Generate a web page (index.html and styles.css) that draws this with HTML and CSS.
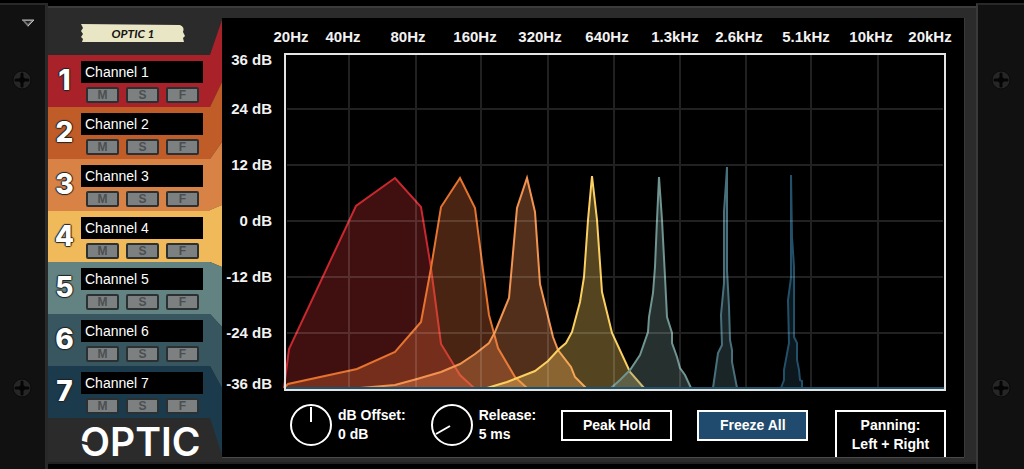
FILE: index.html
```html
<!DOCTYPE html>
<html lang="en">
<head>
  <meta charset="UTF-8">
  <title>Optic 1</title>
  <link rel="stylesheet" href="styles.css">
</head>
<body>
  <svg width="0" height="0" class="defs" aria-hidden="true">
    <symbol id="screw" viewBox="0 0 20 20">
      <circle cx="10" cy="10" r="9" fill="#262626" stroke="#0b0b0b" stroke-width="1"/>
      <path d="M10 4v12M4 10h12" stroke="#050505" stroke-width="3" stroke-linecap="round"/>
      <circle cx="10" cy="10" r="3" fill="#050505"/>
    </symbol>
  </svg>

  <div class="rack">
    <aside class="rail rail-left">
      <div class="rail-top">
        <button class="fold" aria-label="Fold device">
          <svg width="14" height="9" viewBox="0 0 14 9">
            <path d="M1 1h12L7 8z" fill="#777"/>
            <path d="M4 2h6L7 5z" fill="#222"/>
            <path d="M1 1h12L7 7" fill="none" stroke="#bbb" stroke-width="1"/>
          </svg>
        </button>
      </div>
      <svg class="screw"><use href="#screw"/></svg>
      <svg class="screw"><use href="#screw"/></svg>
    </aside>

    <main class="panel">
      <div class="side">
        <div class="strip">
          <div class="strip-head">
            <div class="tape">
              <svg viewBox="0 0 104 18" preserveAspectRatio="none" aria-hidden="true">
                <path d="M0 0L99 1Q104 3 102 8L104 12L102 14L103 18L1 18L2 15L0 13L2 10L0 7L2 4z" fill="#e9e6c6"/>
              </svg>
              <span>OPTIC 1</span>
            </div>
          </div>

          <!-- Channels -->
          <div class="channels" id="channels"></div>

          <div class="strip-foot">
            <svg class="logo" width="130" height="46" viewBox="0 0 130 46">
              <text x="1" y="35">OPTIC</text>
              <path d="M0 19L11 22V25L0 22z" fill="#2b2b2b"/>
            </svg>
          </div>
        </div>

        <!-- Coloured edges that fan out towards the display -->
        <svg class="wings" viewBox="0 0 12 458" preserveAspectRatio="none" aria-hidden="true">
          <path d="M0 49L12 14V76L0 101z" fill="#a9222a"/>
          <path d="M0 101L12 76V136L0 153z" fill="#c05c27"/>
          <path d="M0 153L12 136V199L0 204z" fill="#d98245"/>
          <path d="M0 204L12 199V261L0 256z" fill="#f0ba5a"/>
          <path d="M0 256L12 261V321L0 308z" fill="#628381"/>
          <path d="M0 308L12 321V382L0 360z" fill="#375660"/>
          <path d="M0 360L12 382V449L0 412z" fill="#1b3b4d"/>
        </svg>
      </div>

      <section class="screen">
        <svg class="graph" viewBox="222 18 742 374" role="img" aria-label="Band levels by frequency">
          <g class="axis axis-x">
            <text x="291" y="42">20Hz</text>
            <text x="343" y="42">40Hz</text>
            <text x="408" y="42">80Hz</text>
            <text x="475" y="42">160Hz</text>
            <text x="540" y="42">320Hz</text>
            <text x="607" y="42">640Hz</text>
            <text x="675" y="42">1.3kHz</text>
            <text x="739" y="42">2.6kHz</text>
            <text x="806" y="42">5.1kHz</text>
            <text x="871" y="42">10kHz</text>
            <text x="930" y="42">20kHz</text>
          </g>
          <g class="axis axis-y">
            <text x="272" y="65">36 dB</text>
            <text x="272" y="114">24 dB</text>
            <text x="272" y="170">12 dB</text>
            <text x="272" y="226">0 dB</text>
            <text x="272" y="282">-12 dB</text>
            <text x="272" y="338">-24 dB</text>
            <text x="272" y="389">-36 dB</text>
          </g>
          <g class="bands">
            <path class="band b1" d="M284 388L289 349L356 206L395 178L421 207L431 268L441 344L460 375L474 388"/>
            <path class="band b2" d="M284 388L288 384L357 369L395 352L421 322L431 268L441 207L460 178L475 208L483 270L489 315L498 348L515 377L527 388"/>
            <path class="band b3" d="M360 388L395 385L417 379L441 372L460 364L475 354L489 343L495 332L509 298L517 208L527 178L535 212L540 284L553 337L558 350L571 367L575 377L586 388"/>
            <path class="band b4" d="M487 388L507 382L535 371L548 361L559 349L566 343L572 332L580 302L584 277L588 220L592 176L597 220L602 292L612 333L630 372L644 388"/>
            <path class="band b5" d="M611 388L620 380L630 370L640 355L648 332L649 317L653 293L655 267L657 220L659 177L662 220L665 277L667 317L672 333L672 343L677 357L680 368L685 375L691 388"/>
            <path class="band b6" d="M713 388L718 353L722 345L721 315L724 283L724 211L726 183L727 167L727 270L729 307L730 340L732 350L732 362L737 388"/>
            <path class="band b7" d="M781 388L784 380L784 370L789 343L788 300L791 278L791 175L792 237L794 267L794 337L797 343L797 360L799 370L800 380L802 381L802 388"/>
          </g>
          <path class="grid" d="M349 55V388M416 55V388M481 55V388M548 55V388M614 55V388M680 55V388M746 55V388M811 55V388M878 55V388M287 109H943M287 165H943M287 221H943M287 277H943M287 333H943"/>
          <path d="M285 388H945" stroke="#235069" stroke-width="2"/>
          <rect class="frame" x="285" y="54" width="660" height="336"/>
        </svg>

        <div class="controls">
          <label class="dial">
            <span class="knob">
              <svg width="42" height="42" viewBox="0 0 42 42">
                <circle cx="21" cy="21" r="20"/>
                <path d="M21 3v15"/>
              </svg>
              <input type="range" min="-36" max="36" value="0">
            </span>
            <span>dB Offset:<br>0 dB</span>
          </label>
          <label class="dial">
            <span class="knob">
              <svg width="42" height="42" viewBox="0 0 42 42">
                <circle cx="21" cy="21" r="20"/>
                <path d="M19 22L5 30"/>
              </svg>
              <input type="range" min="0" max="100" value="5">
            </span>
            <span>Release:<br>5 ms</span>
          </label>
          <button class="option" aria-pressed="false">Peak Hold</button>
          <button class="option on" aria-pressed="true">Freeze All</button>
          <button class="option tall">Panning:<br>Left + Right</button>
        </div>
      </section>
    </main>

    <aside class="rail rail-right">
      <div class="rail-top"></div>
      <svg class="screw"><use href="#screw"/></svg>
      <svg class="screw"><use href="#screw"/></svg>
    </aside>
  </div>

  <script src="script.js"></script>
</body>
</html>
```

FILE: styles.css
```css
* {
  box-sizing: border-box;
}

body {
  margin: 0;
  background: #000;
  color: #fff;
  font-family: "Liberation Sans", Arial, sans-serif;
}

button {
  font-family: inherit;
  cursor: pointer;
}

.defs {
  position: absolute;
}

.rack {
  display: flex;
  min-height: 100vh;
}

/* Rack rails */
.rail {
  flex: none;
  width: 48px;
  margin-top: 3px;
  background: #111;
  border-top: 2px solid #292929;
  display: flex;
  flex-direction: column;
  align-items: center;
}

.rail-left {
  border-right: 3px solid #292929;
  padding-right: 2px;
}

.rail-right {
  border-left: 2px solid #3a3a3a;
}

.rail-top {
  flex: none;
  align-self: stretch;
  height: 65px;
}

.fold {
  display: block;
  margin: 14px 0 0 21px;
  padding: 0;
  border: none;
  background: none;
  line-height: 0;
}

.screw {
  flex: none;
  width: 20px;
  height: 20px;
  margin-bottom: 288px;
}

.rail .screw:last-child {
  margin-bottom: 0;
}

/* Device front */
.panel {
  flex: 1;
  min-width: 0;
  display: flex;
  margin: 6px 0 5px;
  background: #2b2b2b;
  box-shadow: inset 0 2px 0 #3c3c3c, inset 0 -2px 0 #222;
}

.side {
  flex: none;
  display: flex;
}

.strip {
  width: 162px;
  display: flex;
  flex-direction: column;
}

.strip-head {
  height: 49px;
  padding: 18px 0 0 33px;
}

.tape {
  position: relative;
  width: 104px;
  height: 18px;
  text-align: center;
}

.tape svg {
  position: absolute;
  left: 0;
  top: 0;
  width: 100%;
  height: 100%;
}

.tape span {
  position: relative;
  color: #14140f;
  font: italic bold 12px/18px Lato, sans-serif;
}

.channels {
  flex: 1;
  display: flex;
  flex-direction: column;
}

.channel {
  flex: 1;
  display: flex;
  padding-top: 6px;
}

.c1 { background: #a9222a; }
.c2 { background: #c05c27; }
.c3 { background: #d98245; }
.c4 { background: #f0ba5a; }
.c5 { background: #628381; }
.c6 { background: #375660; }
.c7 { background: #1b3b4d; }

.num {
  width: 33px;
  text-align: center;
  font: 800 28px/38px Inter, sans-serif;
  text-shadow: 1px 0 1px #222, -1px 0 1px #222, 0 1px 1px #222, 0 -1px 1px #222;
}

.name {
  display: block;
  width: 122px;
  height: 22px;
  padding: 0 4px;
  border: none;
  background: #000;
  color: #fff;
  font: 14px/22px "Liberation Sans", Arial, sans-serif;
}

.keys {
  display: flex;
  gap: 7px;
  padding: 4px 0 0 5px;
}

.key {
  width: 33px;
  height: 16px;
  padding: 0;
  border: 2px solid #2b3133;
  border-radius: 2px;
  background: #7c8081;
  color: #4b4f51;
  font-size: 12px;
  font-weight: bold;
  line-height: 12px;
}

.strip-foot {
  height: 46px;
  padding: 3px 0 0 31px;
}

.logo {
  display: block;
  overflow: visible;
}

.logo text {
  fill: #fff;
  font: 600 39px Inter, sans-serif;
}

.wings {
  width: 12px;
  height: 100%;
}

/* Display */
.screen {
  flex: 1;
  min-width: 0;
  margin: 12px 12px 7px 0;
  background: #000;
  box-shadow: 0 1px 0 #4a4a4a, 1px 0 0 #3a3a3a;
  overflow: hidden;
  display: flex;
  flex-direction: column;
}

.graph {
  display: block;
  width: 100%;
}

.axis {
  fill: #f2f2f2;
  font-size: 15px;
  font-weight: bold;
}

.axis-x {
  text-anchor: middle;
}

.axis-y {
  text-anchor: end;
}

.band {
  stroke-width: 2;
  fill-opacity: 0.33;
}

.b1 { fill: #c22d30; stroke: #c9282f; }
.b2 { fill: #e06d36; stroke: #e6732e; }
.b3 { fill: #f59050; stroke: #f29450; }
.b4 { fill: #ffd060; stroke: #fbd060; }
.b5 { fill: #739490; stroke: #6f9491; }
.b6 { fill: #4f7075; stroke: #47707c; }
.b7 { fill: #24465a; stroke: #235069; }

.grid {
  fill: none;
  stroke: #fff;
  stroke-opacity: 0.13;
  stroke-width: 2;
}

.frame {
  fill: none;
  stroke: #e4e4e4;
  stroke-width: 2;
}

.controls {
  flex: 1;
  display: flex;
  align-items: flex-start;
  gap: 25px;
  padding: 12px 18px 0 68px;
  font-size: 14px;
  font-weight: bold;
  line-height: 19px;
  white-space: nowrap;
}

.dial {
  display: flex;
  align-items: center;
  gap: 6px;
}

.knob {
  position: relative;
  width: 42px;
  height: 42px;
}

.knob svg {
  display: block;
  fill: none;
  stroke: #fff;
  stroke-width: 2;
}

.knob input {
  position: absolute;
  left: 0;
  top: 0;
  width: 100%;
  height: 100%;
  margin: 0;
  opacity: 0;
  cursor: pointer;
}

.option {
  width: 111px;
  height: 31px;
  margin-top: 6px;
  padding: 0;
  border: 2px solid #fff;
  background: #000;
  color: #fff;
  font-size: 14px;
  font-weight: bold;
  line-height: 19px;
}

.option.on {
  background: #204b6e;
}

.option.tall {
  align-self: stretch;
  height: auto;
  margin-left: auto;
  border-bottom: none;
}
```

FILE: script.js
```js
const channels = document.getElementById('channels');

for (let i = 1; i <= 7; i++) {
  channels.insertAdjacentHTML('beforeend', `
    <div class="channel c${i}">
      <label class="num" for="name${i}">${i}</label>
      <div>
        <input class="name" id="name${i}" type="text" value="Channel ${i}">
        <div class="keys">
          <button class="key">M</button>
          <button class="key">S</button>
          <button class="key">F</button>
        </div>
      </div>
    </div>`);
}
```
